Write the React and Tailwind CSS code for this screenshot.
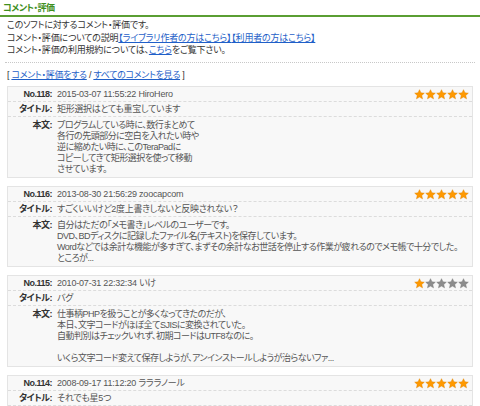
import React from "react";

function Star({ on }) {
  return (
    <svg width="11" height="11" viewBox="0 0 24 24" className="block">
      <path
        d="M12 1.5l3.1 6.9 7.4.7-5.6 5 1.7 7.4L12 17.6l-6.6 3.9 1.7-7.4-5.6-5 7.4-.7z"
        fill={on ? "#ff9900" : "#8c8c8c"}
        stroke={on ? "#e08400" : "#7a7a7a"}
        strokeWidth="1"
        strokeLinejoin="round"
      />
    </svg>
  );
}

function Stars({ n }) {
  return (
    <div className="flex pr-[3px]">
      {[0, 1, 2, 3, 4].map((i) => (
        <Star key={i} on={i < n} />
      ))}
    </div>
  );
}

function Card({ no, meta, title, body, stars }) {
  return (
    <div className="mx-[7px] border border-[#e4e4e4] bg-[#f8f8f8] text-[#555]">
      <div className="flex items-center h-[15px] border-b border-dashed border-[#dcdcdc]">
        <div className="w-[44px] text-right font-bold text-[#333] shrink-0">{no}:</div>
        <div className="pl-[5px] flex-1 tracking-[-0.2px]">{meta}</div>
        <Stars n={stars} />
      </div>
      <div className="flex items-center h-[15px] border-b border-dashed border-[#dcdcdc]">
        <div className="w-[44px] text-right font-bold text-[#333] shrink-0">タイトル:</div>
        <div className="pl-[5px] flex-1 tracking-[-0.3px]">{title}</div>
      </div>
      <div className="flex pt-[3px] pb-[2px] leading-[11px]">
        <div className="w-[44px] text-right font-bold text-[#333] shrink-0">本文:</div>
        <div className="pl-[5px] flex-1">
          {body.map((l, i) => (
            <div key={i} className="h-[11px] whitespace-nowrap">{l}</div>
          ))}
        </div>
      </div>
    </div>
  );
}

export default function App() {
  return (
    <div
      className="w-[480px] h-[406px] overflow-hidden bg-white text-[9px] leading-[12.5px] tracking-[-0.5px] text-[#333] [font-feature-settings:'palt']"
      style={{ fontFamily: '"Liberation Sans", "Noto Sans CJK JP", sans-serif' }}
    >
      <div className="px-[3px] pt-[2px] h-[15px] leading-[12px] font-bold text-[#3f8f1e]">コメント・評価</div>
      <div className="h-[2px] bg-[#5a9e32]"></div>
      <div className="px-[7px] pt-[2px] pb-[5px] tracking-[-0.2px]">
        <div>このソフトに対するコメント・評価です。</div>
        <div>
          コメント・評価についての説明
          <a className="text-[#1f5fc8] underline">【ライブラリ作者の方はこちら】</a>
          <a className="text-[#1f5fc8] underline">【利用者の方はこちら】</a>
        </div>
        <div>
          コメント・評価の利用規約については、<a className="text-[#1f5fc8] underline">こちら</a>をご覧下さい。
        </div>
      </div>
      <div className="mx-[5px] border-t border-dotted border-[#c8c8c8]"></div>
      <div className="px-[7px] pt-[6px] pb-[5px] tracking-[-0.3px]">
        [ <a className="text-[#1f5fc8] underline">コメント・評価をする</a> /{" "}
        <a className="text-[#1f5fc8] underline">すべてのコメントを見る</a> ]
      </div>
      <div className="flex flex-col gap-[8px]">
        <Card
          no="No.118"
          meta="2015-03-07 11:55:22 HiroHero"
          title="矩形選択はとても重宝しています"
          stars={5}
          body={[
            "プログラムしている時に、数行まとめて",
            "各行の先頭部分に空白を入れたい時や",
            "逆に縮めたい時に、このTeraPadに",
            "コピーしてきて矩形選択を使って移動",
            "させています。",
          ]}
        />
        <Card
          no="No.116"
          meta="2013-08-30 21:56:29 zoocapcom"
          title="すごくいいけど2度上書きしないと反映されない？"
          stars={5}
          body={[
            "自分はただの「メモ書き」レベルのユーザーです。",
            "DVD、BDディスクに記録したファイル名(テキスト)を保存しています。",
            "Wordなどでは余計な機能が多すぎて、まずその余計なお世話を停止する作業が疲れるのでメモ帳で十分でした。",
            "ところが...",
          ]}
        />
        <Card
          no="No.115"
          meta="2010-07-31 22:32:34 いけ"
          title="バグ"
          stars={1}
          body={[
            "仕事柄PHPを扱うことが多くなってきたのだが、",
            "本日、文字コードがほぼ全てSJISに変換されていた。",
            "自動判別はチェックいれず、初期コードはUTF8なのに。",
            "",
            "いくら文字コード変えて保存しようが、アンインストールしようが治らないファ...",
          ]}
        />
        <Card
          no="No.114"
          meta="2008-09-17 11:12:20 ラララノール"
          title="それでも星5つ"
          stars={5}
          body={["", ""]}
        />
      </div>
    </div>
  );
}
